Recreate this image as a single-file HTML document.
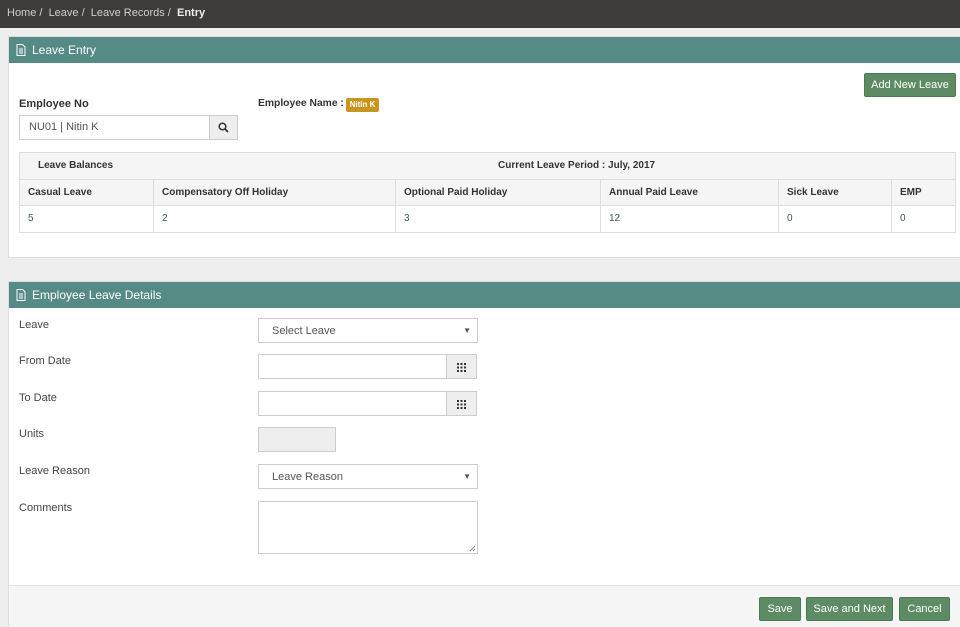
<!DOCTYPE html>
<html><head><style>
*{box-sizing:border-box;margin:0;padding:0}
body{width:960px;height:623px;overflow:hidden;background:#eeeeee;font-family:"Liberation Sans",sans-serif;font-size:11px;color:#333;position:relative}
.abs{position:absolute}
.top{left:0;top:0;width:960px;height:28px;background:#3e3c3a;color:#cfcfcf;font-size:11px;line-height:26px;padding-left:7px}
.top b{color:#eee;font-weight:bold}
.panel{left:8px;width:953px;background:#fff;border:1px solid #ddd}
.ph{height:26px;background:#558a85;color:#fff;font-size:12px;line-height:26px;padding-left:23px;position:relative}
.ph svg{position:absolute;left:7px;top:7px}
.lbl{font-weight:bold;color:#333;white-space:nowrap}
.inp{border:1px solid #ccc;background:#fff}
.btn{background:#5d8c64;border:1px solid #4d7a54;color:#fff;border-radius:2px;text-align:center;font-size:11px}
table{border-collapse:collapse;position:absolute;left:19px;top:152px;width:937px}
td{border:1px solid #ddd;height:26.5px;padding-left:8px;font-size:10px;vertical-align:middle}
tr.h td{background:#f5f5f5;font-weight:bold}
tr.d td{color:#3a5a55}
.fl{left:19px;color:#444}
.cal{position:absolute;right:0;top:0;width:30px;height:100%;background:#eee;border-left:1px solid #ccc}
</style></head><body>
<div class="abs top">Home /&nbsp; Leave /&nbsp; Leave Records /&nbsp; <b>Entry</b></div>

<div class="abs panel" style="top:36px;height:222px">
<div class="ph"><svg width="10" height="12" viewBox="0 0 10 12"><path d="M1 .5h5.5l2.5 2.5v8.5H1z" fill="none" stroke="#fff"/><path d="M3 5h4M3 7h4M3 9h4" stroke="#fff"/></svg>Leave Entry</div>
</div>
<div class="abs btn" style="left:864px;top:73px;width:92px;height:24px;line-height:22px">Add New Leave</div>
<div class="abs lbl" style="left:19px;top:98px">Employee No</div>
<div class="abs lbl" style="left:258px;top:98px;font-size:10.3px">Employee Name :</div>
<div class="abs" style="left:346px;top:98px;width:33px;height:14px;background:#c8961e;border-radius:2px;color:#fff;font-size:8px;font-weight:bold;text-align:center;line-height:14px">Nitin K</div>
<div class="abs inp" style="left:19px;top:115px;width:219px;height:25px;padding-left:9px;line-height:23px;color:#555">NU01 | Nitin K
<div class="cal" style="width:28px"><svg style="position:absolute;left:8px;top:6px" width="11" height="11" viewBox="0 0 11 11"><circle cx="4.5" cy="4.5" r="3.3" fill="none" stroke="#333" stroke-width="1.5"/><path d="M7 7l3 3" stroke="#333" stroke-width="1.8"/></svg></div></div>

<table>
<tr class="h"><td colspan="6" style="padding-left:18px;position:relative">Leave Balances<span style="position:absolute;left:478px;top:7px">Current Leave Period : July, 2017</span></td></tr>
<tr class="h"><td style="width:134px">Casual Leave</td><td style="width:242px">Compensatory Off Holiday</td><td style="width:205px">Optional Paid Holiday</td><td style="width:178px">Annual Paid Leave</td><td style="width:113px">Sick Leave</td><td>EMP</td></tr>
<tr class="d"><td>5</td><td>2</td><td>3</td><td>12</td><td>0</td><td>0</td></tr>
</table>

<div class="abs panel" style="top:281px;height:345px">
<div class="ph"><svg width="10" height="12" viewBox="0 0 10 12"><path d="M1 .5h5.5l2.5 2.5v8.5H1z" fill="none" stroke="#fff"/><path d="M3 5h4M3 7h4M3 9h4" stroke="#fff"/></svg>Employee Leave Details</div>
<div style="position:absolute;left:0;top:303px;width:951px;height:42px;background:#f5f5f5;border-top:1px solid #e3e3e3"></div>
</div>
<div class="abs fl" style="top:319px">Leave</div>
<div class="abs fl" style="top:355px">From Date</div>
<div class="abs fl" style="top:392px">To Date</div>
<div class="abs fl" style="top:428px">Units</div>
<div class="abs fl" style="top:465px">Leave Reason</div>
<div class="abs fl" style="top:502px">Comments</div>

<div class="abs inp" style="left:258px;top:318px;width:220px;height:25px;padding-left:13px;line-height:24px;color:#555">Select Leave<span style="position:absolute;right:6px;font-size:8px">▼</span></div>
<div class="abs inp" style="left:258px;top:354px;width:219px;height:25px"><div class="cal"><svg style="position:absolute;left:10px;top:8px" width="9" height="9"><g fill="#333"><rect x="0" y="0" width="2" height="2"/><rect x="3.5" y="0" width="2" height="2"/><rect x="7" y="0" width="2" height="2"/><rect x="0" y="3.5" width="2" height="2"/><rect x="3.5" y="3.5" width="2" height="2"/><rect x="7" y="3.5" width="2" height="2"/><rect x="0" y="7" width="2" height="2"/><rect x="3.5" y="7" width="2" height="2"/><rect x="7" y="7" width="2" height="2"/></g></svg></div></div>
<div class="abs inp" style="left:258px;top:391px;width:219px;height:25px"><div class="cal"><svg style="position:absolute;left:10px;top:8px" width="9" height="9"><g fill="#333"><rect x="0" y="0" width="2" height="2"/><rect x="3.5" y="0" width="2" height="2"/><rect x="7" y="0" width="2" height="2"/><rect x="0" y="3.5" width="2" height="2"/><rect x="3.5" y="3.5" width="2" height="2"/><rect x="7" y="3.5" width="2" height="2"/><rect x="0" y="7" width="2" height="2"/><rect x="3.5" y="7" width="2" height="2"/><rect x="7" y="7" width="2" height="2"/></g></svg></div></div>
<div class="abs inp" style="left:258px;top:427px;width:78px;height:25px;background:#eee"></div>
<div class="abs inp" style="left:258px;top:464px;width:220px;height:25px;padding-left:13px;line-height:24px;color:#555">Leave Reason<span style="position:absolute;right:6px;font-size:8px">▼</span></div>
<div class="abs inp" style="left:258px;top:501px;width:220px;height:53px"><svg style="position:absolute;right:1px;bottom:1px" width="7" height="7"><path d="M6 1L1 6M6 4L4 6" stroke="#888"/></svg></div>

<div class="abs btn" style="left:759px;top:597px;width:42px;height:24px;line-height:22px">Save</div>
<div class="abs btn" style="left:806px;top:597px;width:87px;height:24px;line-height:22px">Save and Next</div>
<div class="abs btn" style="left:899px;top:597px;width:51px;height:24px;line-height:22px">Cancel</div>
</body></html>
